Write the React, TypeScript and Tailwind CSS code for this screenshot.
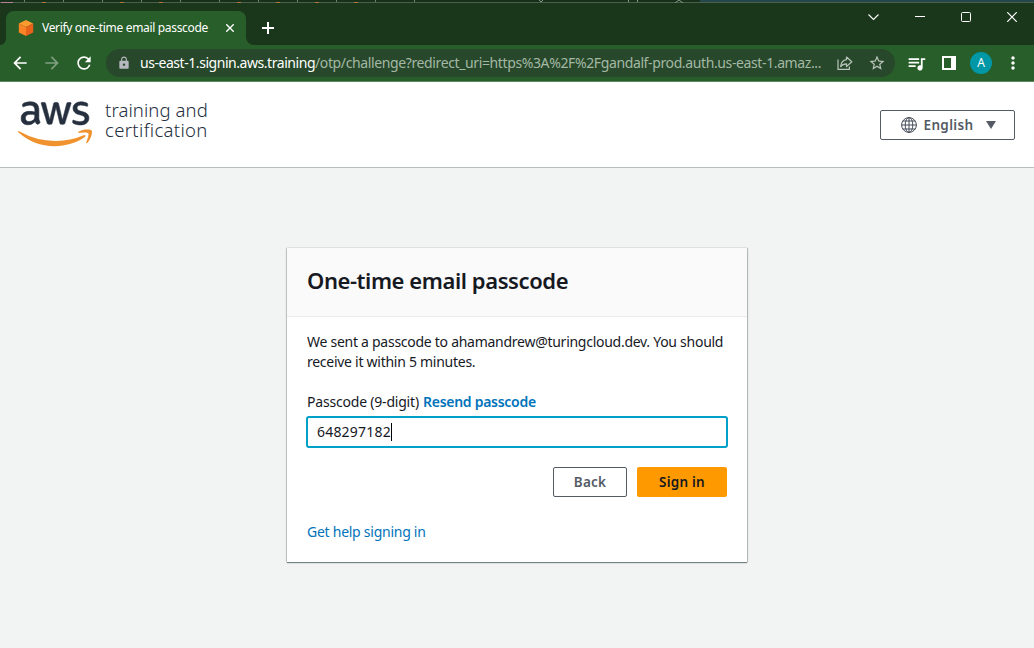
import React from 'react';
import { FaAws } from 'react-icons/fa';
import { MdArrowBack, MdArrowForward, MdRefresh, MdLock, MdStarOutline, MdQueueMusic, MdMoreVert } from 'react-icons/md';

const tabMarks = [24, 63, 102, 141, 180, 219, 258, 297, 336, 375, 414];
const orangeMarks = [43, 121, 160, 238, 277, 316, 355];

function TopEdge() {
  return (
    <svg className="block h-[3px] w-[1034px] shrink-0" width="1034" height="3" viewBox="0 0 1034 3">
      <rect width="1034" height="3" fill="#17301a" />
      <rect x="700" width="334" height="2" fill="#24474b" />
      <rect y="2" width="1034" height="1" fill="#4b604c" />
      {tabMarks.map((x) => (
        <rect key={x} x={x} width="1" height="2" fill="#6f8070" />
      ))}
      {orangeMarks.map((x) => (
        <rect key={x} x={x - 1} y="2" width="4" height="1" fill="#b3793c" />
      ))}
      <rect x="1" y="2" width="12" height="1" fill="#b87f9b" />
      <path d="M539 0L541 2L543 0M675 3L679 0L683 3M628.5 0V2M637.5 0V2" stroke="#8c988c" fill="none" />
    </svg>
  );
}

function TitleBar() {
  return (
    <div className="flex h-[42px] shrink-0 items-end bg-[#1b371b] pl-[6px]">
      <div className="relative flex h-[34px] w-[240px] items-center rounded-t-[8px] bg-[#285e2a]">
        <svg className="absolute bottom-0 -left-[6px]" width="6" height="6" viewBox="0 0 6 6">
          <path d="M6 0A6 6 0 0 1 0 6H6Z" fill="#285e2a" />
        </svg>
        <svg className="absolute -right-[8px] bottom-0" width="8" height="8" viewBox="0 0 8 8">
          <path d="M0 0A8 8 0 0 0 8 8H0Z" fill="#285e2a" />
        </svg>
        <svg className="ml-3 shrink-0" width="16" height="16" viewBox="0 0 16 16">
          <path d="M8 0 15.2 3.6 8 7 .8 3.6Z" fill="#ff9a2e" />
          <path d="M.8 3.6 8 7V16L.8 12.4Z" fill="#f98325" />
          <path d="M15.2 3.6 8 7V16L15.2 12.4Z" fill="#e8611a" />
        </svg>
        <span className="ml-2 w-[184px] text-[12px] leading-4 tracking-[-0.33px] whitespace-nowrap text-white">Verify one-time email passcode</span>
        <svg className="absolute top-[13px] left-[220px]" width="8" height="8" viewBox="0 0 8 8" stroke="#fff" strokeWidth="1.4">
          <path d="M.3.3 7.7 7.7M7.7.3.3 7.7" />
        </svg>
      </div>
      <svg className="mb-[11px] ml-4" width="12" height="12" viewBox="0 0 12 12" stroke="#fff" strokeWidth="2">
        <path d="M6 0V12M0 6H12" />
      </svg>
      <div className="mr-[17px] mb-[23px] ml-auto flex items-center gap-[36px]">
        <svg width="11" height="11" viewBox="0 0 11 11" fill="none" stroke="#fff" strokeWidth="1.1">
          <path d="M.5 3.5 5.5 8.5l5-5" />
        </svg>
        <svg width="10" height="11" viewBox="0 0 10 11" fill="none" stroke="#fff">
          <path d="M0 5.5H10" />
        </svg>
        <svg width="10" height="10" viewBox="0 0 10 10" fill="none" stroke="#fff">
          <rect x=".5" y=".5" width="9" height="9" rx="1" />
        </svg>
        <svg width="10" height="10" viewBox="0 0 10 10" fill="none" stroke="#fff" strokeWidth="1.2">
          <path d="M.2.2 9.8 9.8M9.8.2.2 9.8" />
        </svg>
      </div>
    </div>
  );
}

function Toolbar() {
  return (
    <div className="flex h-[37px] shrink-0 items-center border-b border-[#5d875e] bg-[#285e2a] text-white">
      <MdArrowBack className="ml-[10px]" size={20} />
      <MdArrowForward className="ml-3 text-[#7f9f80]" size={20} />
      <MdRefresh className="ml-3" size={20} />
      <div className="ml-3 flex h-7 w-[789px] items-center rounded-full bg-[#27482a] text-[#bcc5bc]">
        <MdLock className="ml-[11px] shrink-0 text-[#b5b8bf]" size={14} />
        <div className="ml-[9px] flex w-[690px] text-[14px] leading-5 whitespace-nowrap">
          <span className="w-[175px] tracking-[-0.45px] text-white">us-east-1.signin.aws.training</span>
          <span className="tracking-[-0.38px] text-[#a4b8a5]">/otp/challenge?redirect_uri=https%3A%2F%2Fgandalf-prod.auth.us-east-1.amaz...</span>
        </div>
        <svg className="ml-[7px] shrink-0" width="16" height="16" viewBox="0 0 16 16" fill="none" stroke="currentColor" strokeWidth="1.2">
          <path d="M1 4.5V14.4H12.4V11.5" />
          <path d="M9.5 2 14.8 6.8 9.5 11.6V8.8C6.8 8.8 5 9.6 3.6 11.6 4 7.8 6 5 9.5 4.6Z" strokeLinejoin="round" />
        </svg>
        <MdStarOutline className="ml-[15px] shrink-0" size={18} />
      </div>
      <MdQueueMusic className="ml-[11px]" size={21} />
      <svg className="ml-[15px]" width="14" height="14" viewBox="0 0 14 14">
        <path fillRule="evenodd" fill="#fff" d="M0 0H14V14H0ZM2 2V12H9V2Z" />
      </svg>
      <span className="ml-[14px] flex size-[22px] items-center justify-center rounded-full bg-[#0097a7] text-[12px] leading-none">A</span>
      <MdMoreVert className="ml-[11px]" size={20} />
    </div>
  );
}

function SiteHeader() {
  return (
    <header className="flex h-[86px] shrink-0 justify-between border-b border-[#b9bfbf] bg-white">
      <div className="flex">
        <div className="mt-[19px] ml-[18px] h-[48px] w-[75px]">
          <div className="h-[27px] overflow-hidden text-[#252f3e]">
            <FaAws className="-mt-[7px] h-[60px] w-[74px]" stroke="currentColor" strokeWidth="5" />
          </div>
          <div className="h-[21px] overflow-hidden text-[#f0932e]">
            <FaAws className="-mt-[34px] h-[60px] w-[74px]" />
          </div>
        </div>
        <p className="mt-[18px] ml-3 text-[18.5px] leading-5 font-light tracking-[0.1px] whitespace-nowrap text-[#252f3e]">
          training and
          <br />
          <span className="tracking-[0.35px]">certification</span>
        </p>
      </div>
      <button className="mt-7 mr-[19px] flex h-[30px] w-[135px] items-center rounded-[2px] border border-[#545b64] text-[13.5px] font-semibold text-[#545b64]">
        <svg className="ml-5 shrink-0" width="16" height="16" viewBox="0 0 16 16" fill="none" stroke="#454d58">
          <circle cx="8" cy="8" r="7.4" />
          <ellipse cx="8" cy="8" rx="3.8" ry="7.4" />
          <path d="M8 .5V15.5M.5 8H15.5M1.8 4H14.2M1.8 12H14.2" />
        </svg>
        <span className="ml-[6px] w-[51px] tracking-[0.35px] whitespace-nowrap">English</span>
        <svg className="ml-3" width="10" height="8" viewBox="0 0 10 8">
          <path d="M0 0H10L5 8Z" fill="#545b64" />
        </svg>
      </button>
    </header>
  );
}

function PasscodeCard() {
  return (
    <section className="mx-auto mt-20 h-[314px] w-[460px] bg-white text-[14px] leading-5 text-[#16191f] shadow-[0_1px_1px_0_rgba(0,28,36,0.5),1px_0_1px_0_rgba(0,28,36,0.2),-1px_0_1px_0_rgba(0,28,36,0.15),0_-1px_0_0_#eaeded]">
      <div className="flex h-[69px] items-center border-b border-[#eaeded] bg-[#fafafa] px-5 pb-[4px]">
        <h1 className="text-[22px] font-semibold tracking-[-0.42px] whitespace-nowrap">One-time email passcode</h1>
      </div>
      <div className="px-5 pt-[15px]">
        <p className="tracking-[-0.27px] whitespace-nowrap">
          We sent a passcode to ahamandrew@turingcloud.dev. You should
          <br />
          receive it within 5 minutes.
        </p>
        <div className="mt-5 flex whitespace-nowrap">
          <span className="w-[116px] tracking-[-0.2px]">Passcode (9-digit)</span>
          <a className="font-semibold tracking-[-0.28px] text-[#0073bb]">Resend passcode</a>
        </div>
        <div className="-mx-px mt-1 flex h-8 items-center rounded-[3px] border-2 border-[#00a1c9] pl-[9px]">
          <span className="tracking-[0.2px]">648297182</span>
          <span className="h-[18px] w-px bg-black" />
        </div>
        <div className="mt-[19px] flex justify-end gap-[10px] text-[13.5px] font-semibold tracking-[0.25px]">
          <button className="h-[30px] w-[74px] rounded-[2px] border border-[#545b64] text-[#545b64]">Back</button>
          <button className="h-[30px] w-[90px] rounded-[2px] bg-[#ff9900]">Sign in</button>
        </div>
        <a className="mt-[25px] block tracking-[-0.26px] text-[#0073bb]">Get help signing in</a>
      </div>
    </section>
  );
}

export default function App() {
  return (
    <div className="flex h-[648px] w-[1034px] flex-col overflow-hidden bg-[#f2f3f3] font-['Noto_Sans',sans-serif]">
      <TopEdge />
      <TitleBar />
      <Toolbar />
      <SiteHeader />
      <PasscodeCard />
    </div>
  );
}
